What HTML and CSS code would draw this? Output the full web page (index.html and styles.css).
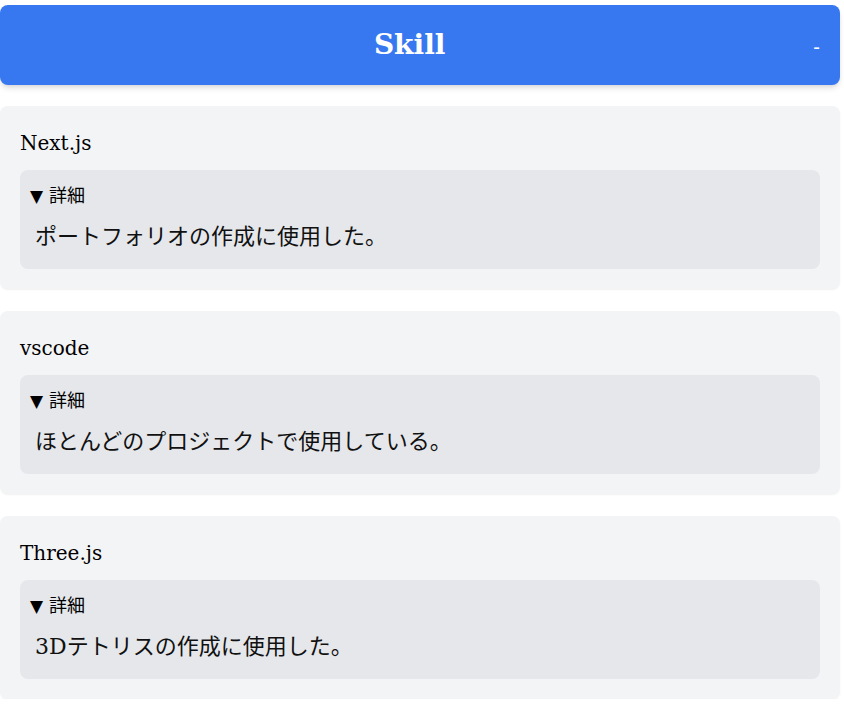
FILE: index.html
```html
<!DOCTYPE html>
<html lang="ja">
<head>
<meta charset="utf-8">
<title>Skill</title>
<link rel="stylesheet" href="styles.css">
</head>
<body>
<main class="page">
  <header class="header">
    <h1 class="header-title">Skill</h1>
    <button class="toggle" type="button">-</button>
  </header>
  <section class="list">
    <article class="card">
      <h2 class="card-title">Next.js</h2>
      <details class="detail" open>
        <summary class="summary"><span class="marker">▼</span>詳細</summary>
        <p class="detail-text">ポートフォリオの作成に使用した。</p>
      </details>
    </article>
    <article class="card">
      <h2 class="card-title">vscode</h2>
      <details class="detail" open>
        <summary class="summary"><span class="marker">▼</span>詳細</summary>
        <p class="detail-text">ほとんどのプロジェクトで使用している。</p>
      </details>
    </article>
    <article class="card">
      <h2 class="card-title">Three.js</h2>
      <details class="detail" open>
        <summary class="summary"><span class="marker">▼</span>詳細</summary>
        <p class="detail-text">3Dテトリスの作成に使用した。</p>
      </details>
    </article>
  </section>
</main>
</body>
</html>
```
FILE: styles.css
```css
html, body {
  margin: 0;
  padding: 0;
  background: #ffffff;
}

body {
  font-family: "DejaVu Serif", "Noto Sans CJK JP", serif;
  color: #111111;
}

.page {
  width: 840px;
  padding-top: 5px;
  display: flex;
  flex-direction: column;
  gap: 21px;
}

.header {
  height: 80px;
  background: #3778f0;
  border-radius: 8px;
  box-shadow: 0 4px 6px -1px rgba(0,0,0,0.12), 0 2px 4px -2px rgba(0,0,0,0.1);
  display: flex;
  align-items: center;
  padding: 0 18px 0 0;
}

.header-title {
  flex: 1;
  margin: 0;
  padding: 0 0 0 8px;
  text-align: center;
  color: #ffffff;
  font-family: "DejaVu Serif", serif;
  font-weight: bold;
  font-size: 28px;
  line-height: 36px;
}

.toggle {
  background: none;
  border: none;
  color: #ffffff;
  font-family: "Liberation Sans", sans-serif;
  font-size: 20px;
  padding: 0 2px;
  line-height: 20px;
  margin-top: 4px;
}

.list {
  display: flex;
  flex-direction: column;
  gap: 22px;
}

.card {
  background: #f3f4f6;
  border-radius: 8px;
  box-shadow: 0 1px 2px rgba(0,0,0,0.06);
  padding: 20px;
  height: 183px;
  box-sizing: border-box;
}

.card-title {
  margin: 0 0 10px 0;
  font-family: "DejaVu Serif", serif;
  font-weight: normal;
  font-size: 20px;
  line-height: 34px;
  color: #000000;
}

.detail {
  background: #e5e7eb;
  border-radius: 8px;
  padding: 10px 10px 18px 10px;
  height: 99px;
  box-sizing: border-box;
}

.summary {
  list-style: none;
  font-family: "Noto Sans CJK JP", "DejaVu Sans", sans-serif;
  font-size: 18px;
  line-height: 28px;
  color: #000000;
}

.summary::-webkit-details-marker {
  display: none;
}

.marker {
  font-family: "DejaVu Sans", sans-serif;
  font-size: 17px;
  margin-right: 6px;
}

.detail-text {
  margin: 13px 0 0 5px;
  font-family: "DejaVu Serif", "Noto Sans CJK JP", serif;
  font-size: 22px;
  line-height: 28px;
  color: #111111;
}
```
